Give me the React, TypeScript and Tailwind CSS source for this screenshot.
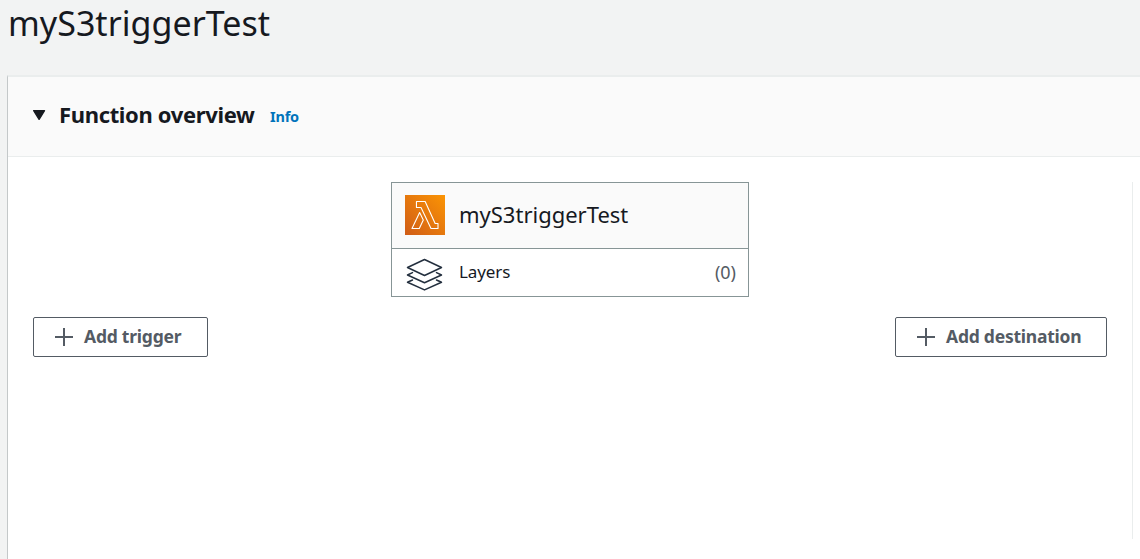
function LambdaIcon() {
  return (
    <svg className="block h-10 w-10 shrink-0" viewBox="0 0 80 80" fill="none">
      <defs>
        <linearGradient id="lambda" x1="0" y1="1" x2="1" y2="0">
          <stop offset="0" stopColor="#d05c17" />
          <stop offset="1" stopColor="#fb9404" />
        </linearGradient>
      </defs>
      <rect width="80" height="80" fill="url(#lambda)" />
      <g stroke="#fff" strokeWidth="2.2" strokeLinejoin="round">
        <path d="M29.3 35 14 67h14.6l8-16.9Z" />
        <path d="M22.9 13h17.4l20 44H66v10H52L32 25h-9.1Z" />
      </g>
    </svg>
  );
}

function LayersIcon() {
  return (
    <svg className="mt-[3px] block h-9 w-10 shrink-0" viewBox="0 0 40 36" fill="none" stroke="#232f3e" strokeWidth="1.5" strokeLinejoin="round" strokeLinecap="round">
      <path d="M19.5 3.5 36.5 11.5 19.5 19.5 2.5 11.5Z" />
      <path d="M7.5 16.6 2.5 19 19.5 26.7 36.5 19 31.5 16.6" />
      <path d="M7.5 24 2.5 26.3 19.5 33.9 36.5 26.3 31.5 24" />
    </svg>
  );
}

function AddButton({ label, width }: { label: string; width: string }) {
  return (
    <button className={`flex h-10 items-center rounded-[2px] border border-[#545b64] bg-white pl-[21px] text-[#545b64] ${width}`}>
      <svg className="h-[18px] w-[18px] shrink-0" viewBox="0 0 18 18" fill="none" stroke="#545b64" strokeWidth="2">
        <path d="M9 0v18M0 9h18" />
      </svg>
      <span className="mb-0.5 ml-[11px] whitespace-nowrap text-[17.5px] leading-6 font-bold tracking-[-0.23px]">{label}</span>
    </button>
  );
}

export default function App() {
  return (
    <div className="flex h-[559px] w-[1140px] flex-col overflow-hidden bg-[#f2f3f3] font-['Noto_Sans',sans-serif] text-[#16191f]">
      <h1 className="h-[75px] shrink-0 pl-2 text-[34px] leading-[46px] tracking-[0.03px]">myS3triggerTest</h1>
      <main className="ml-[7px] flex flex-1 flex-col border-t-2 border-l border-t-[#eaeded] border-l-[#c4c8c9] bg-white">
        <header className="flex h-20 shrink-0 items-center border-b border-[#eaeded] bg-[#fafafa] pb-1 pl-[25px]">
          <svg className="h-3 w-[14px] shrink-0" viewBox="0 0 14 12">
            <path d="M.7 1.7h10.8L6.1 10.3Z" fill="#16191f" stroke="#16191f" strokeWidth="1.4" strokeLinejoin="round" />
          </svg>
          <h2 className="ml-[12px] w-[196px] whitespace-nowrap text-[22px] leading-8 font-bold tracking-[-0.35px]"><span className="block pb-px">Function overview</span></h2>
          <a className="mt-0.5 ml-[15px] text-[14.5px] leading-5 font-bold tracking-[-0.2px] text-[#0073bb]">Info</a>
        </header>
        <section className="mt-[25px] flex h-[357px] w-[1125px] flex-col border-r border-[#eaeded]">
          <div className="ml-[383px] h-[115px] w-[358px] border border-[#879596]">
            <div className="flex h-[66px] items-center border-b border-[#879596] bg-[#fafafa] pb-px pl-[13px]">
              <LambdaIcon />
              <span className="mb-[3px] ml-[14px] text-[22px] leading-8">myS3triggerTest</span>
            </div>
            <div className="flex h-[47px] items-center pr-3 pl-[13px]">
              <LayersIcon />
              <span className="mb-0.5 ml-[14px] text-[17px] leading-6 tracking-[-0.1px]">Layers</span>
              <span className="mb-0.5 ml-auto text-[18px] leading-6 text-[#545b64]">(0)</span>
            </div>
          </div>
          <div className="mt-5 flex justify-between pr-[25px] pl-[25px]">
            <AddButton label="Add trigger" width="w-[175px]" />
            <AddButton label="Add destination" width="w-[212px]" />
          </div>
        </section>
      </main>
    </div>
  );
}
